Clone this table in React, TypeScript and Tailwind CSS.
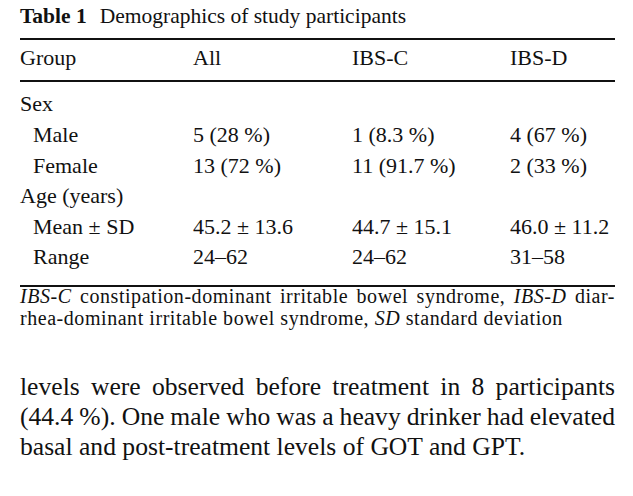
const filas = [
  { grupo: "Sex", sub: false, all: "", c: "", d: "" },
  { grupo: "Male", sub: true, all: "5 (28 %)", c: "1 (8.3 %)", d: "4 (67 %)" },
  { grupo: "Female", sub: true, all: "13 (72 %)", c: "11 (91.7 %)", d: "2 (33 %)" },
  { grupo: "Age (years)", sub: false, all: "", c: "", d: "" },
  { grupo: "Mean ± SD", sub: true, all: "45.2 ± 13.6", c: "44.7 ± 15.1", d: "46.0 ± 11.2" },
  { grupo: "Range", sub: true, all: "24–62", c: "24–62", d: "31–58" },
];

const cols = "grid grid-cols-[173px_159px_158px_1fr]";

export default function App() {
  return (
    <div className="w-[633px] h-[496px] bg-white text-[#111] font-['Liberation_Serif',serif] overflow-hidden">
      <div className="ml-[20px] w-[595px]">
        {/* Caption */}
        <p className="pt-[3px] text-[21.5px] leading-[26px] whitespace-nowrap">
          <span className="font-bold">Table 1</span>
          <span className="ml-[13px]">Demographics of study participants</span>
        </p>

        {/* Table */}
        <div className="mt-[9px] border-t-2 border-[#111]">
          <div className={`${cols} pt-[2.7px] pb-[7.3px] text-[22px] leading-[30px] border-b-2 border-[#111]`}>
            <span>Group</span>
            <span>All</span>
            <span>IBS-C</span>
            <span>IBS-D</span>
          </div>
          <div className="pt-[7.4px] pb-[12px] border-b-2 border-[#111] text-[22px] leading-[30.6px] whitespace-nowrap">
            {filas.map((f, i) => (
              <div key={i} className={cols}>
                <span className={f.sub ? "pl-[13px]" : ""}>{f.grupo}</span>
                <span>{f.all}</span>
                <span>{f.c}</span>
                <span>{f.d}</span>
              </div>
            ))}
          </div>
        </div>

        {/* Footnote */}
        <div className="-mt-[2px] text-[20px] leading-[22px] tracking-[0.55px] whitespace-nowrap">
          <p className="text-justify [text-align-last:justify] [word-spacing:-2px]">
            <i>IBS-C</i> constipation-dominant irritable bowel syndrome, <i>IBS-D</i> diar-
          </p>
          <p>
            rhea-dominant irritable bowel syndrome, <i>SD</i> standard deviation
          </p>
        </div>

        {/* Body text */}
        <div className="mt-[43px] text-[25.6px] leading-[30px] whitespace-nowrap">
          <p className="text-justify [text-align-last:justify] [word-spacing:-2px]">
            levels were observed before treatment in 8 participants
          </p>
          <p className="text-justify [text-align-last:justify] [word-spacing:-2px]">
            (44.4 %). One male who was a heavy drinker had elevated
          </p>
          <p>basal and post-treatment levels of GOT and GPT.</p>
        </div>
      </div>
    </div>
  );
}
